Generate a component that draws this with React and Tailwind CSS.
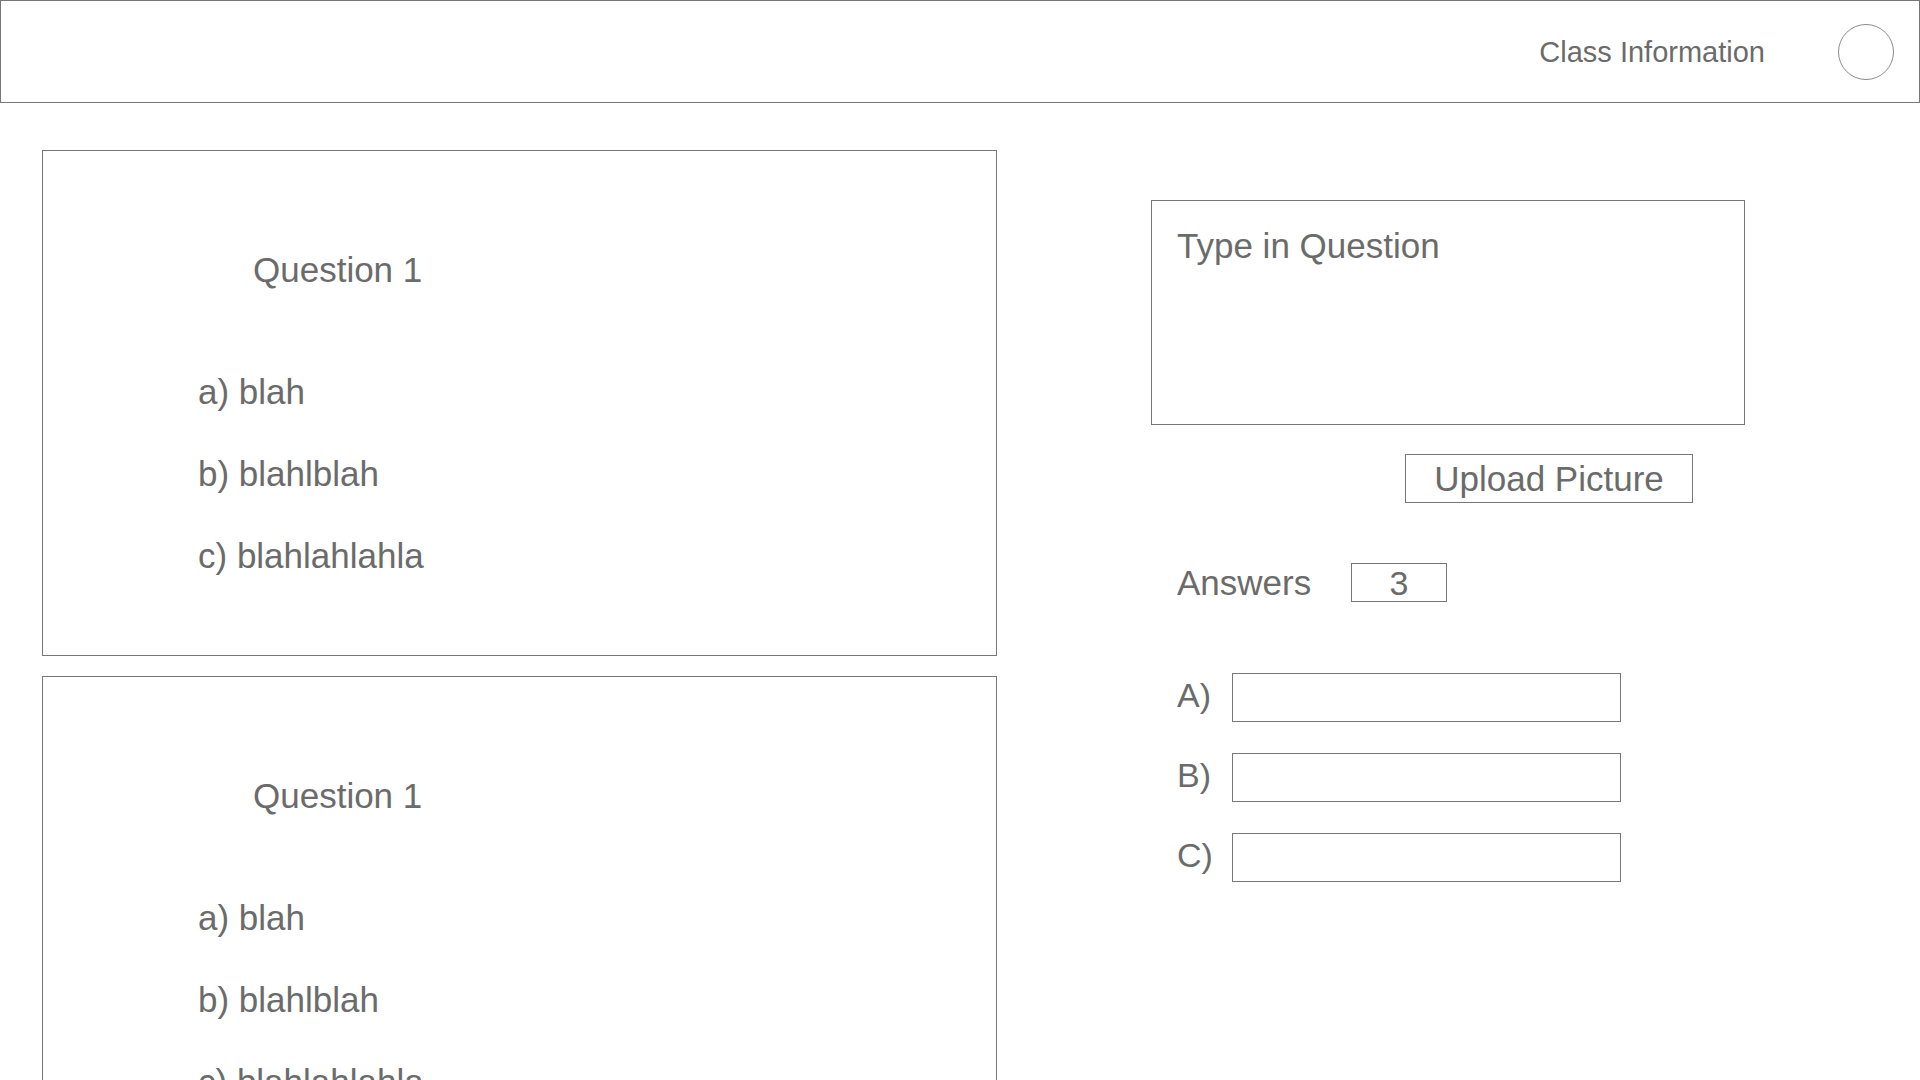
import React from "react";

// Quiz builder wireframe: question list on the left, question editor on the right
const questions = [
  { title: "Question 1", answers: ["a) blah", "b) blahlblah", "c) blahlahlahla"] },
  { title: "Question 1", answers: ["a) blah", "b) blahlblah", "c) blahlahlahla"] },
];

function QuestionCard({ q }) {
  return (
    <div className="h-[506px] shrink-0 border border-[#777777] pt-[101px]">
      <p className="pl-[210px] text-[35px] leading-none">{q.title}</p>
      <div className="mt-[87px] flex flex-col gap-[47px] pl-[155px]">
        {q.answers.map((a, i) => (
          <p key={i} className="text-[35px] leading-none">
            {a}
          </p>
        ))}
      </div>
    </div>
  );
}

export default function App() {
  const letters = ["A)", "B)", "C)"];

  return (
    <div
      className="h-screen overflow-hidden bg-white text-[#6b6b6b]"
      style={{ fontFamily: '"Liberation Sans", Arial, sans-serif' }}
    >
      <header className="flex h-[103px] items-center justify-end border border-[#777777]">
        <span className="pt-[2px] text-[29px] leading-none">Class Information</span>
        <div className="ml-[73px] mr-[25px] h-[56px] w-[56px] rounded-full border border-[#8a8a8a]" />
      </header>

      <main className="flex">
        {/* left: list of questions */}
        <div className="ml-[42px] mt-[47px] flex w-[955px] flex-col gap-[20px]">
          {questions.map((q, i) => (
            <QuestionCard key={i} q={q} />
          ))}
        </div>

        {/* right: editor */}
        <div className="ml-[154px] mt-[97px] w-[594px]">
          <div className="h-[225px] border border-[#777777] pl-[25px] pt-[27px]">
            <p className="text-[35px] leading-none">Type in Question</p>
          </div>

          <button className="ml-[254px] mt-[29px] flex h-[49px] w-[288px] items-center justify-center border border-[#777777] text-[35px] leading-none text-[#6b6b6b]">
            Upload Picture
          </button>

          <div className="mt-[60px] flex items-center pl-[26px]">
            <span className="w-[174px] text-[35px] leading-none">Answers</span>
            <div className="flex h-[39px] w-[96px] items-center justify-center border border-[#777777] text-[34px] leading-none">
              3
            </div>
          </div>

          <div className="mt-[71px] flex flex-col gap-[31px] pl-[26px]">
            {letters.map((l) => (
              <div key={l} className="flex items-center">
                <span className="w-[55px] pb-[6px] text-[34px] leading-none">{l}</span>
                <div className="h-[49px] w-[389px] border border-[#777777]" />
              </div>
            ))}
          </div>
        </div>
      </main>
    </div>
  );
}
